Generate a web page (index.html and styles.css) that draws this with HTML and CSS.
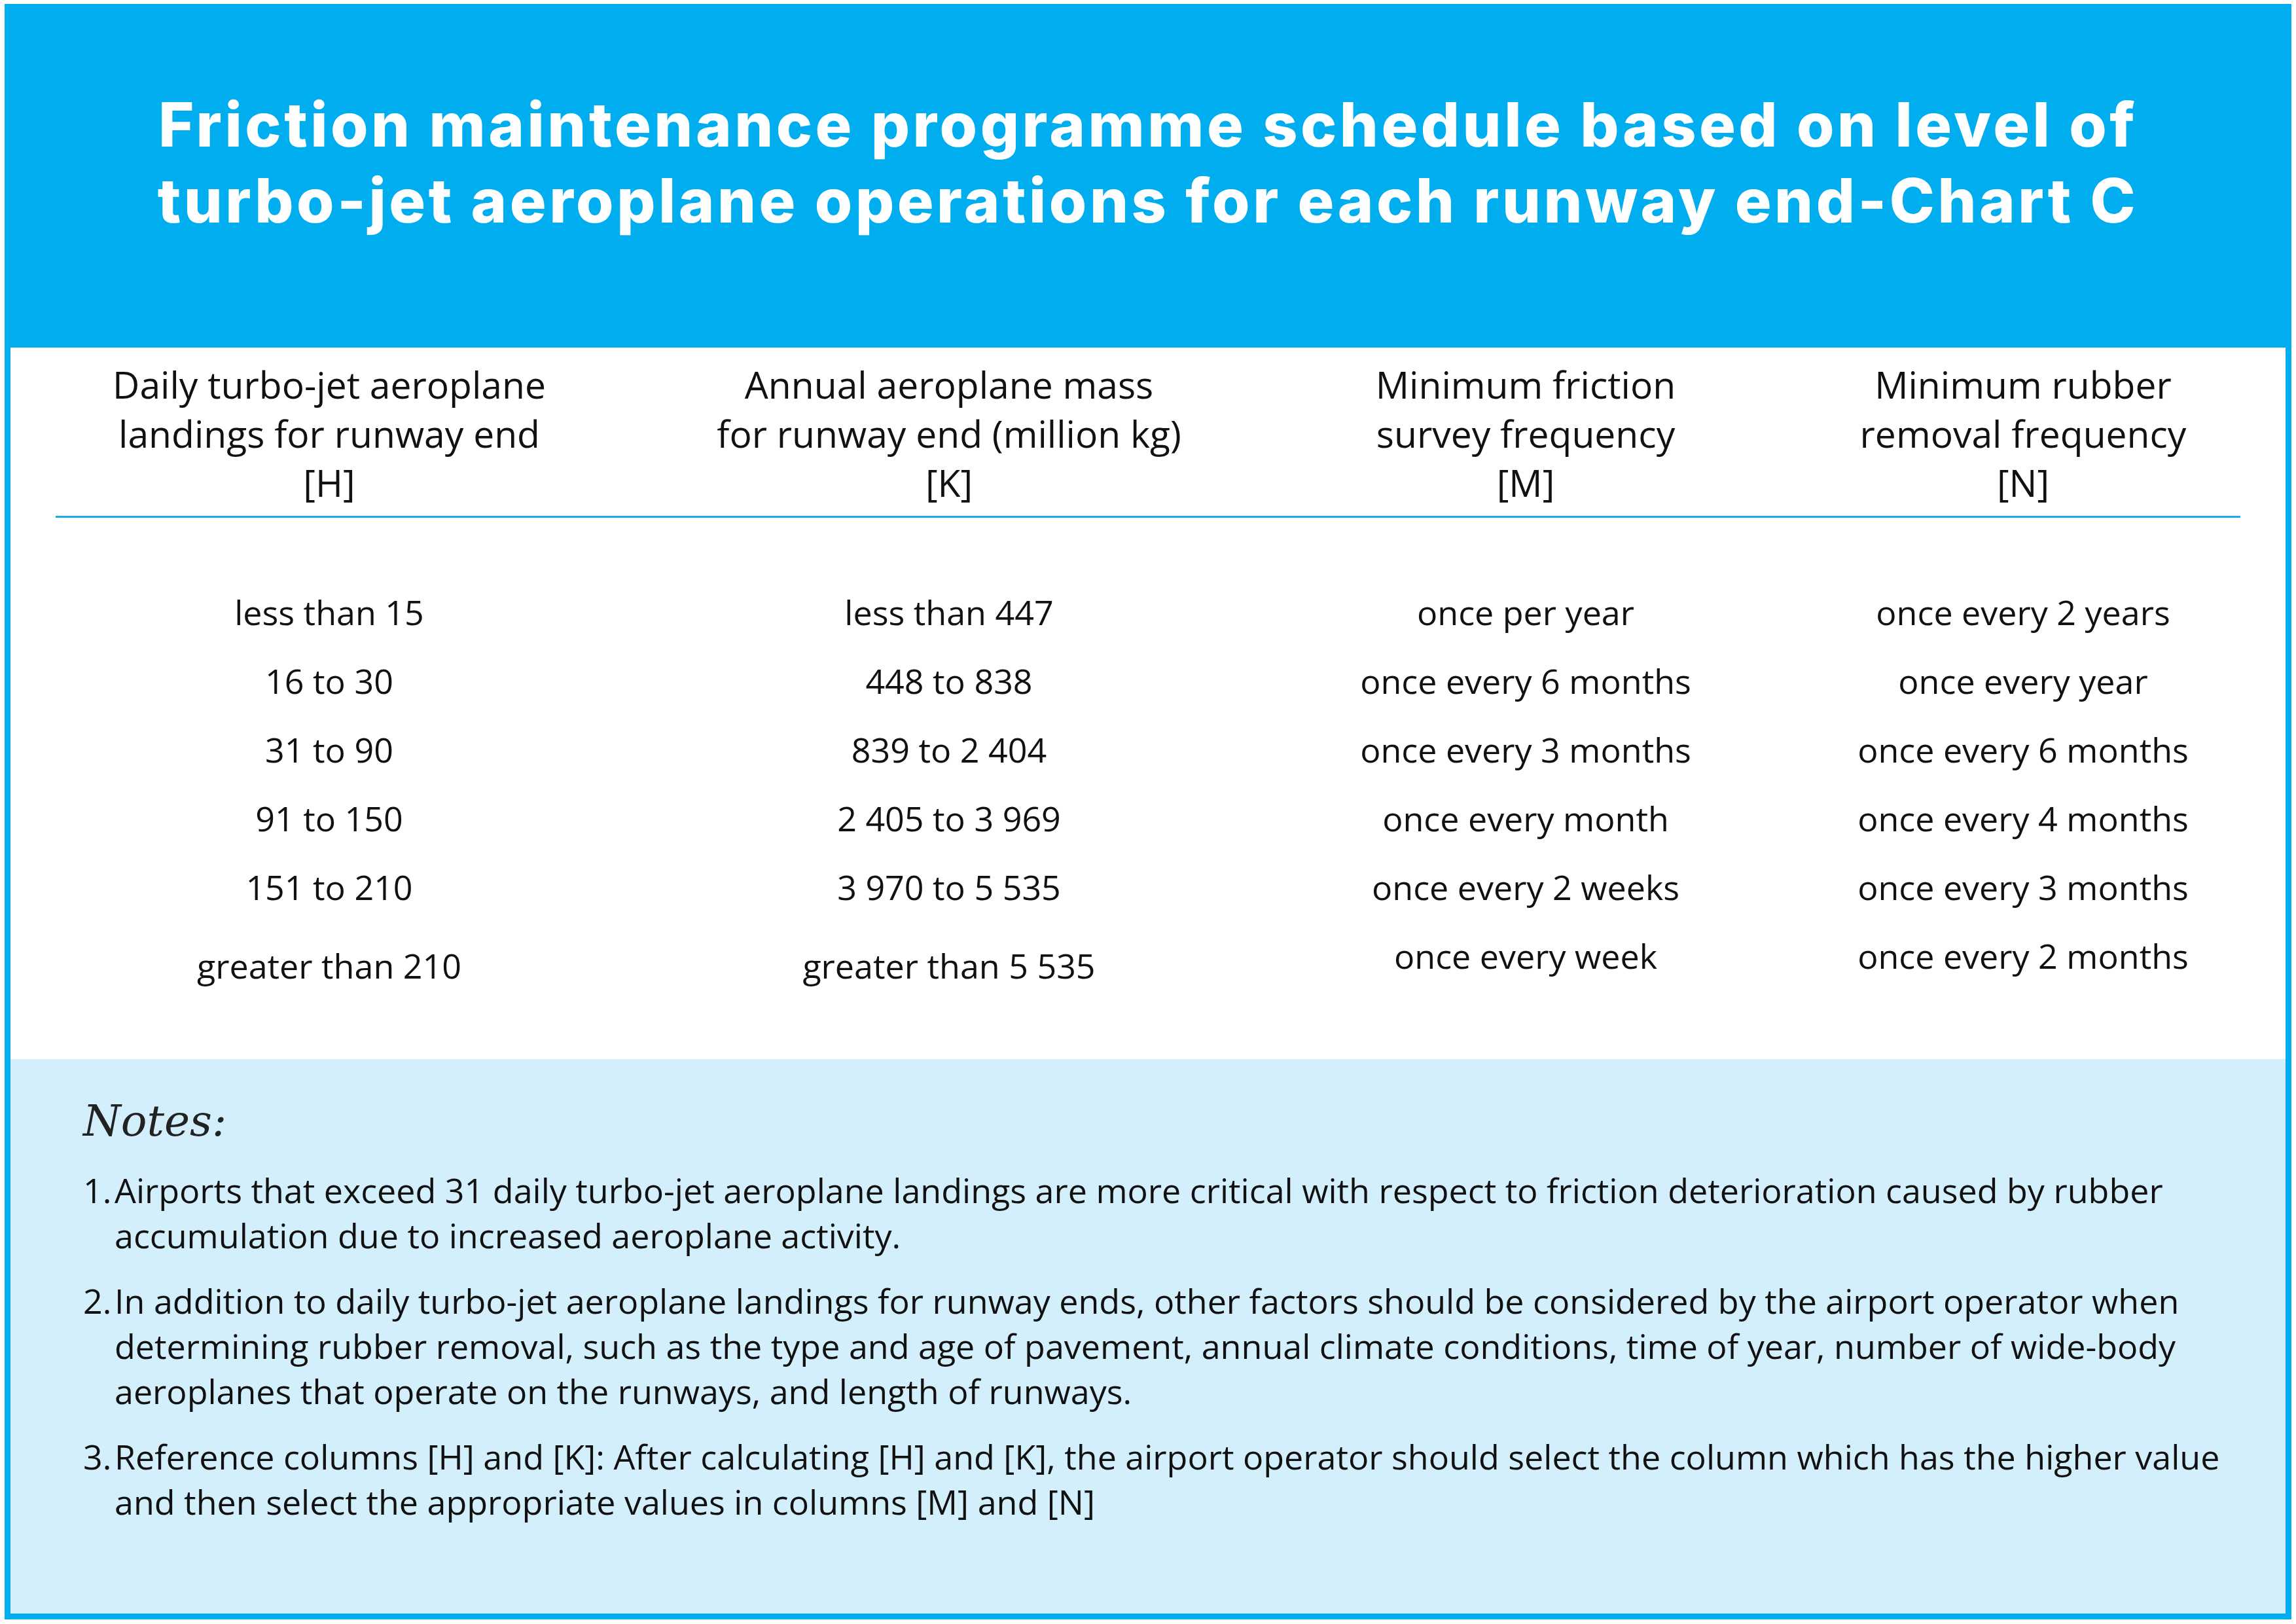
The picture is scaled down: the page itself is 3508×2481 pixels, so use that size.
FILE: index.html
```html
<!DOCTYPE html>
<html lang="en">
<head>
<meta charset="utf-8">
<title>Friction maintenance programme schedule - Chart C</title>
<link rel="stylesheet" href="styles.css">
</head>
<body>
<div class="frame">
  <header class="title-band">
    <h1 class="title">Friction maintenance programme schedule based on level of<br>turbo-jet aeroplane operations for each runway end-Chart C</h1>
  </header>
  <section class="table-panel">
    <div class="grid head">
      <div class="cell">Daily turbo-jet aeroplane<br>landings for runway end<br>[H]</div>
      <div class="cell">Annual aeroplane mass<br>for runway end (million kg)<br>[K]</div>
      <div class="cell">Minimum friction<br>survey frequency<br>[M]</div>
      <div class="cell c4">Minimum rubber<br>removal frequency<br>[N]</div>
    </div>
    <div class="rule"></div>
    <div class="body">
      <div class="grid row"><div class="cell">less than 15</div><div class="cell">less than 447</div><div class="cell">once per year</div><div class="cell c4">once every 2 years</div></div>
      <div class="grid row"><div class="cell">16 to 30</div><div class="cell">448 to 838</div><div class="cell">once every 6 months</div><div class="cell c4">once every year</div></div>
      <div class="grid row"><div class="cell">31 to 90</div><div class="cell">839 to 2 404</div><div class="cell">once every 3 months</div><div class="cell c4">once every 6 months</div></div>
      <div class="grid row"><div class="cell">91 to 150</div><div class="cell">2 405 to 3 969</div><div class="cell">once every month</div><div class="cell c4">once every 4 months</div></div>
      <div class="grid row"><div class="cell">151 to 210</div><div class="cell">3 970 to 5 535</div><div class="cell">once every 2 weeks</div><div class="cell c4">once every 3 months</div></div>
      <div class="grid row"><div class="cell low">greater than 210</div><div class="cell low">greater than 5 535</div><div class="cell">once every week</div><div class="cell c4">once every 2 months</div></div>
    </div>
  </section>
  <section class="notes">
    <h2 class="notes-title">Notes:</h2>
    <ol class="note-list">
      <li class="note"><span class="num">1.</span><span class="txt">Airports that exceed 31 daily turbo-jet aeroplane landings are more critical with respect to friction deterioration caused by rubber<br>accumulation due to increased aeroplane activity.</span></li>
      <li class="note"><span class="num">2.</span><span class="txt">In addition to daily turbo-jet aeroplane landings for runway ends, other factors should be considered by the airport operator when<br>determining rubber removal, such as the type and age of pavement, annual climate conditions, time of year, number of wide-body<br>aeroplanes that operate on the runways, and length of runways.</span></li>
      <li class="note"><span class="num">3.</span><span class="txt">Reference columns [H] and [K]: After calculating [H] and [K], the airport operator should select the column which has the higher value<br>and then select the appropriate values in columns [M] and [N]</span></li>
    </ol>
  </section>
</div>
</body>
</html>
```

FILE: styles.css
```css
* { box-sizing: border-box; }
html, body { background: #ffffff; }
body {
  margin: 6px 7px 7px 7px;
  font-family: "Open Sans", "Noto Sans", sans-serif;
  color: #111111;
}
.frame {
  background: #00aeef;
  padding: 0 9px 9px 9px;
  height: 2468px;
  display: flex;
  flex-direction: column;
}
.title-band {
  height: 525px;
  padding-top: 126px;
  flex: none;
}
.title {
  margin: 0;
  color: #ffffff;
  text-align: center;
  font-family: "Inter", "Lato", sans-serif;
  font-weight: 800;
  font-size: 93px;
  line-height: 116px;
  letter-spacing: 4.5px;
}
.table-panel {
  background: #ffffff;
  height: 1087px;
  padding: 19px 69px 0 69px;
  flex: none;
}
.grid {
  display: grid;
  grid-template-columns: 836px 1058px 704px 1fr;
  text-align: center;
}
.head { font-size: 57px; }
.head .cell { line-height: 75px; }
.c4 { padding-left: 76px; }
.rule {
  height: 3px;
  background: #1aabe8;
  margin-top: 13px;
}
.body { margin-top: 91px; }
.row { align-items: start; font-size: 52px; }
.row .cell { line-height: 105px; white-space: nowrap; }
.row .low { padding-top: 15px; }
.notes {
  background: #d2effb;
  flex: 1;
  padding: 58px 100px 0 111px;
}
.notes-title {
  margin: 0;
  font-family: "DejaVu Serif", "Liberation Serif", serif;
  font-style: italic;
  font-weight: normal;
  font-size: 66px;
  line-height: 73px;
  color: #222222;
}
.note-list {
  list-style: none;
  margin: 34px 0 0 0;
  padding: 0;
}
.note {
  display: grid;
  grid-template-columns: 48px 1fr;
  font-size: 52px;
  line-height: 69px;
  white-space: nowrap;
}
.note + .note { margin-top: 31px; }
```
